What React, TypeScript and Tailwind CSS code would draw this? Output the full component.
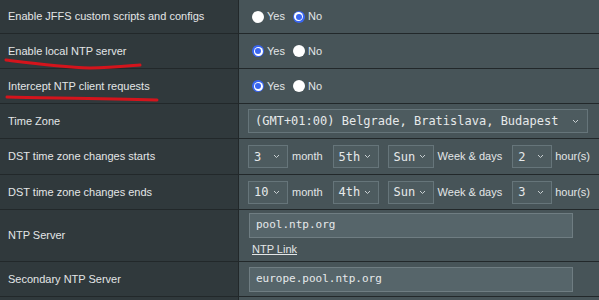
import React from 'react';

const Chevron = () => (
  <svg width="7" height="5" viewBox="0 0 7 5" className="shrink-0">
    <path d="M1 1 L3.5 3.5 L6 1" stroke="#c9d0d2" strokeWidth="1" fill="none" />
  </svg>
);

const Select: React.FC<{ value: string; w: string }> = ({ value, w }) => (
  <div
    className={`${w} h-[23px] flex items-center justify-between pl-[5px] pr-[7px] bg-[#4d5b5f] border border-[#66757a] text-[12px] text-[#e6e9ea] font-['DejaVu_Sans_Mono',monospace]`}
  >
    <span className="whitespace-pre">{value}</span>
    <Chevron />
  </div>
);

const Radio: React.FC<{ checked: boolean; label: string }> = ({ checked, label }) => (
  <span className="flex items-center mr-[8px]">
    {checked ? (
      <span className="w-[12px] h-[12px] rounded-full bg-[#3a66f0] flex items-center justify-center">
        <span className="w-[9px] h-[9px] rounded-full bg-white flex items-center justify-center">
          <span className="w-[6px] h-[6px] rounded-full bg-[#3a66f0]" />
        </span>
      </span>
    ) : (
      <span className="w-[12px] h-[12px] rounded-full bg-white" />
    )}
    <span className="ml-[3px]">{label}</span>
  </span>
);

const Row: React.FC<{ label: string; h?: string; pad?: string; children: React.ReactNode }> = ({
  label,
  h = 'h-[35px]',
  pad = 'items-center pl-[9px]',
  children,
}) => (
  <div className={`flex ${h} border-b border-[#22282a]`}>
    <div className="w-[239px] shrink-0 bg-[#30393c] border-r border-[#22282a] flex items-center pl-[8px]">{label}</div>
    <div className={`flex-1 bg-[#475458] flex ${pad}`}>{children}</div>
  </div>
);

const Input: React.FC<{ value: string }> = ({ value }) => (
  <div className="w-[324px] h-[25px] flex items-center px-[6px] bg-[#56656a] border border-[#6f7d82] text-[11px] text-[#e6e9ea] font-['DejaVu_Sans_Mono',monospace]">
    {value}
  </div>
);

const Dst: React.FC<{ m: string; wk: string; hr: string }> = ({ m, wk, hr }) => (
  <div className="flex items-center whitespace-nowrap">
    <Select value={m} w="w-[40px]" />
    <span className="ml-[4px] mr-[10px]">month</span>
    <Select value={wk} w="w-[46px]" />
    <span className="w-[9px]" />
    <Select value="Sun" w="w-[46px]" />
    <span className="ml-[4px] mr-[10px]">Week &amp; days</span>
    <Select value={hr} w="w-[40px]" />
    <span className="ml-[3px]">hour(s)</span>
  </div>
);

export default function App() {
  return (
    <div className="relative w-[599px] h-[300px] overflow-hidden bg-[#475458] text-[11px] text-[#e3e6e7] font-['Liberation_Sans',Arial,sans-serif]">
      <Row label="Enable JFFS custom scripts and configs" h="h-[34px]" pad="items-center pl-[13px]">
        <Radio checked={false} label="Yes" />
        <Radio checked label="No" />
      </Row>
      <Row label="Enable local NTP server" pad="items-center pl-[13px]">
        <Radio checked label="Yes" />
        <Radio checked={false} label="No" />
      </Row>
      <Row label="Intercept NTP client requests" pad="items-center pl-[13px]">
        <Radio checked label="Yes" />
        <Radio checked={false} label="No" />
      </Row>
      <Row label="Time Zone">
        <Select value="(GMT+01:00) Belgrade, Bratislava, Budapest" w="w-[340px] !h-[24px] !pl-[6px] !pr-[8px]" />
      </Row>
      <Row label="DST time zone changes starts" h="h-[36px]">
        <Dst m="3" wk="5th" hr="2" />
      </Row>
      <Row label="DST time zone changes ends">
        <Dst m="10" wk="4th" hr="3" />
      </Row>
      <Row label="NTP Server" h="h-[52px]" pad="items-start pt-[3px] pl-[10px]">
        <div className="flex flex-col">
          <Input value="pool.ntp.org" />
          <span className="mt-[3px] ml-[3px] underline">NTP Link</span>
        </div>
      </Row>
      <Row label="Secondary NTP Server" pad="items-center pl-[10px]">
        <Input value="europe.pool.ntp.org" />
      </Row>
      <div className="flex h-[20px]">
        <div className="w-[239px] bg-[#30393c] border-r border-[#22282a]" />
        <div className="flex-1 bg-[#475458]" />
      </div>

      <svg className="absolute left-0 top-0 pointer-events-none" width="170" height="110" viewBox="0 0 170 110">
        <path d="M6 60 C 30 63, 60 67, 90 68 C 110 68, 128 66, 140 65" stroke="#d4141c" strokeWidth="3" fill="none" strokeLinecap="round" />
        <path d="M7 97 C 45 98, 100 98, 157 100" stroke="#d4141c" strokeWidth="3" fill="none" strokeLinecap="round" />
      </svg>
    </div>
  );
}
